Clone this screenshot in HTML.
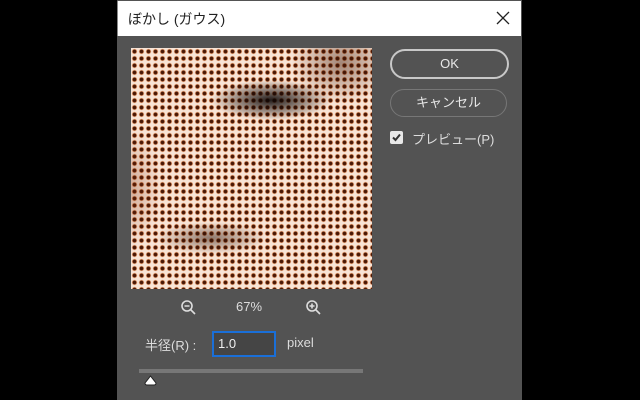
<!DOCTYPE html>
<html><head><meta charset="utf-8"><style>
body{margin:0;width:640px;height:400px;background:#000;position:relative;overflow:hidden;font-family:"Liberation Sans","Noto Sans CJK JP",sans-serif}
.dlg{position:absolute;left:117px;top:0;width:405px;height:400px;background:#535353}
.title{position:absolute;left:0;top:1px;width:403px;height:35px;background:#fff;border-left:1px solid #888}
.title span{position:absolute;left:10px;top:8px;font-size:14px;color:#222}
.img{position:absolute;left:131px;top:48px;width:241px;height:241px;
background:
radial-gradient(ellipse 60px 20px at 140px 52px,rgba(10,5,5,.9),rgba(20,10,5,0) 100%),
radial-gradient(ellipse 55px 16px at 80px 190px,rgba(40,15,5,.5),rgba(0,0,0,0) 100%),
radial-gradient(ellipse 50px 40px at 210px 15px,rgba(60,20,5,.45),rgba(0,0,0,0) 100%),
radial-gradient(ellipse 30px 60px at 0px 140px,rgba(120,40,10,.3),rgba(0,0,0,0) 100%),
radial-gradient(circle at 3.5px 3.5px,#4a1806 1.5px,rgba(210,110,50,.7) 2.2px,transparent 2.9px) 0 0/7px 7px,
#f8e4d6}
.btn{position:absolute;left:390px;width:115px;border-radius:15px;color:#e8e8e8;font-size:13px;text-align:center}
.ok{top:49px;height:26px;line-height:26px;border:2px solid #c8c8c8}
.cn{top:89px;height:26px;line-height:26px;border:1px solid #777}
.t{position:absolute;color:#ddd;font-size:13px}
</style></head><body>
<div class="dlg"></div>
<div class="title" style="left:117px"><span>ぼかし (ガウス)</span>
<svg style="position:absolute;left:378px;top:10px" width="14" height="14"><path d="M1 1L13 13M13 1L1 13" stroke="#222" stroke-width="1.3"/></svg></div>
<div class="img"></div>
<div class="btn ok">OK</div>
<div class="btn cn">キャンセル</div>
<div style="position:absolute;left:390px;top:131px;width:13px;height:13px;background:#e8e8e8;border-radius:2px"></div>
<svg style="position:absolute;left:390px;top:131px" width="13" height="13"><path d="M3 6.5L5.5 9L10 3.5" stroke="#333" stroke-width="2" fill="none"/></svg>
<div class="t" style="left:412px;top:129px;font-size:13px">プレビュー(P)</div>
<svg style="position:absolute;left:180px;top:299px" width="18" height="18"><circle cx="7" cy="7" r="5" stroke="#ddd" stroke-width="1.6" fill="none"/><path d="M4.5 7H9.5M11 11L15 15" stroke="#ddd" stroke-width="1.6"/></svg>
<div class="t" style="left:236px;top:299px">67%</div>
<svg style="position:absolute;left:305px;top:299px" width="18" height="18"><circle cx="7" cy="7" r="5" stroke="#ddd" stroke-width="1.6" fill="none"/><path d="M4.5 7H9.5M7 4.5V9.5M11 11L15 15" stroke="#ddd" stroke-width="1.6"/></svg>
<div class="t" style="left:145px;top:335px">半径(R) :</div>
<div style="position:absolute;left:212px;top:331px;width:60px;height:22px;border:2px solid #1a6fd8;background:#454545;color:#eee;font-size:13px;line-height:22px;text-indent:4px">1.0</div>
<div class="t" style="left:287px;top:335px">pixel</div>
<div style="position:absolute;left:139px;top:369px;width:224px;height:4px;background:#777"></div>
<svg style="position:absolute;left:143px;top:375px" width="15" height="12"><path d="M7.5 1L13 8Q13 10 11 10H4Q2 10 2 8Z" fill="#fff" stroke="#222" stroke-width="1"/></svg>
</body></html>
